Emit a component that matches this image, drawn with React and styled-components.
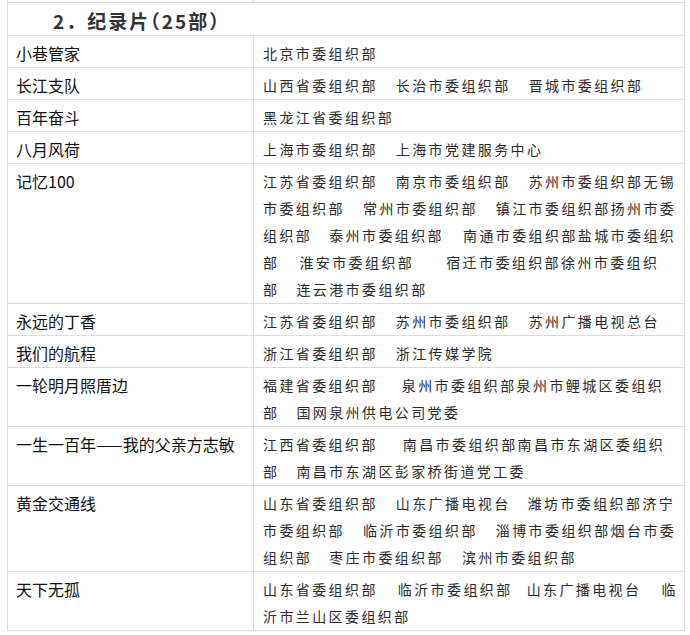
import React from 'react'
import styled, {createGlobalStyle} from 'styled-components'

const GlobalStyle = createGlobalStyle`
    html, body {
        margin: 0;
        padding: 0;
        background: #fff;
    }
`

const Page = styled.main`
    padding-left: 7px;
    width: 690px;
    height: 635px;
    overflow: hidden;
    box-sizing: border-box;
`

const Table = styled.table`
    border-collapse: collapse;
    table-layout: fixed;
    width: 677px;
    font-family: "Noto Sans CJK SC", "Noto Sans", sans-serif;
`

const Stub = styled.td`
    height: 2px;
    padding: 0;
    border-left: 1px solid #dcdcdc;
    border-right: 1px solid #dcdcdc;
`

const Heading = styled.td`
    border: 1px solid #dcdcdc;
    padding: 4px 8px 0 8px;
    line-height: 28px;
    font-size: 19px;
    font-weight: bold;
    letter-spacing: 2px;
    text-indent: 37px;
    color: #333;
`

// narrow (half-width) punctuation, as the heading font sets its brackets
const Punct = styled.span`
    font-feature-settings: "halt";
`

const Cell = styled.td`
    border: 1px solid #dcdcdc;
    vertical-align: top;
    padding: ${p => p.$orgs ? '4px 0 0 9px' : '4px 4px 0 8px'};
    line-height: 27px;
    font-size: ${p => p.$orgs ? '14px' : '16px'};
    letter-spacing: ${p => p.$orgs ? '2.4px' : '0'};
    color: ${p => p.$orgs ? '#2b2b2b' : '#111'};
    white-space: nowrap;
    overflow: hidden;
`

const Dash = styled.span`
    letter-spacing: -4px;
    margin-right: 4px;
`

const Line = styled.div`
    height: 27px;
`

const Gap = styled.span`
    display: inline-block;
    width: ${p => p.$w}px;
`

const rows = [
    ['小巷管家', ['北京市委组织部']],
    ['长江支队', ['山西省委组织部{18}长治市委组织部{18}晋城市委组织部']],
    ['百年奋斗', ['黑龙江省委组织部']],
    ['八月风荷', ['上海市委组织部{18}上海市党建服务中心']],
    ['记忆100', [
        '江苏省委组织部{18}南京市委组织部{18}苏州市委组织部无锡',
        '市委组织部{18}常州市委组织部{18}镇江市委组织部扬州市委',
        '组织部{17}泰州市委组织部{19}南通市委组织部盐城市委组织',
        '部{20}淮安市委组织部{32}宿迁市委组织部徐州市委组织',
        '部{17}连云港市委组织部',
    ]],
    ['永远的丁香', ['江苏省委组织部{18}苏州市委组织部{18}苏州广播电视总台']],
    ['我们的航程', ['浙江省委组织部{18}浙江传媒学院']],
    ['一轮明月照厝边', [
        '福建省委组织部{24}泉州市委组织部泉州市鲤城区委组织',
        '部{17}国网泉州供电公司党委',
    ]],
    ['一生一百年——我的父亲方志敏', [
        '江西省委组织部{25}南昌市委组织部南昌市东湖区委组织',
        '部{17}南昌市东湖区彭家桥街道党工委',
    ]],
    ['黄金交通线', [
        '山东省委组织部{18}山东广播电视台{17}潍坊市委组织部济宁',
        '市委组织部{18}临沂市委组织部{18}淄博市委组织部烟台市委',
        '组织部{17}枣庄市委组织部{18}滨州市委组织部',
    ]],
    ['天下无孤', [
        '山东省委组织部{20}临沂市委组织部{14}山东广播电视台{20}临',
        '沂市兰山区委组织部',
    ]],
]

// "{n}" in a line marks a blank of n px between two names
function OrgLine({text}) {
    const parts = text.split(/\{(\d+)\}/)
    return (
        <Line>
            {parts.map((p, i) => i % 2 ? <Gap key={i} $w={Number(p)} /> : <span key={i}>{p}</span>)}
        </Line>
    )
}

// the em dashes in a title are set narrower than a full em
function Title({text}) {
    const parts = text.split('——')
    if (parts.length === 1) return text
    return <>{parts[0]}<Dash>——</Dash>{parts[1]}</>
}

export default function App() {
    return (
        <Page>
            <GlobalStyle />
            <Table>
                <colgroup>
                    <col style={{width: 246}} />
                    <col style={{width: 431}} />
                </colgroup>
                <tbody>
                    <tr><Stub /><Stub /></tr>
                    <tr>
                        <Heading colSpan={2}>
                            2．纪录片<Punct>（</Punct>25部<Punct>）</Punct>
                        </Heading>
                    </tr>
                    {rows.map(([title, lines]) => (
                        <tr key={title}>
                            <Cell><Title text={title} /></Cell>
                            <Cell $orgs>
                                {lines.map((l, i) => <OrgLine key={i} text={l} />)}
                            </Cell>
                        </tr>
                    ))}
                </tbody>
            </Table>
        </Page>
    )
}
